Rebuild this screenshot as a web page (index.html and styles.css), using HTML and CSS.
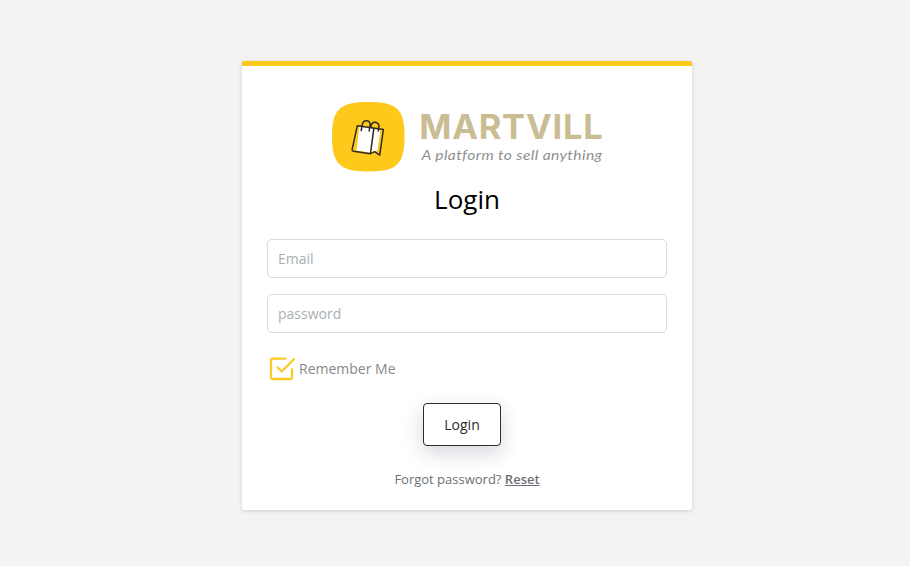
FILE: index.html
```html
<!DOCTYPE html>
<html lang="en">
<head>
<meta charset="utf-8">
<title>Martvill Login</title>
<link rel="stylesheet" href="styles.css">
</head>
<body>
<main class="card">
  <svg class="logo" width="272" height="72" viewBox="331 101 272 72" role="img" aria-label="Martvill">
    <path d="M332 136.500C332 109 340 102 368.500 102S404.500 109 404.500 136.500S397 171.500 368.500 171.500S332 164 332 136.500Z" fill="#fdc91b"/>
    <path d="M359.500 126.300L374 128.500L370.500 152.500L356.500 150.500ZM374.500 129L380.500 129.500L377.500 150.500L374.500 151.500L371 153Z" fill="#fff"/>
    <g fill="none" stroke="#302b20" stroke-width="1.500" stroke-linecap="round" stroke-linejoin="round">
      <path d="M357.300 125.700L383.400 129.500L379.700 155.200L374.600 151.700L370.500 153.700L353.500 151.300Q351.800 150.800 352.200 149.200Z"/>
      <path d="M373.800 128.400L370.500 153.500M361.200 130.500L362.300 124.500Q363.400 120.300 366.700 120.700Q370.700 121.200 370 125.500L369.200 131M370.900 126.500Q371.700 122 375.200 122.200Q379.700 122.800 378.800 127.500L378.300 131"/>
    </g>
    <text class="brand" x="419.200" y="139" textLength="183.500" lengthAdjust="spacing">MARTVILL</text>
    <text class="tagline" x="421.500" y="160" textLength="181" lengthAdjust="spacingAndGlyphs">A platform to sell anything</text>
  </svg>
  <h1 class="title">Login</h1>
  <form class="form">
    <input class="field" type="email" placeholder="Email">
    <input class="field" type="password" placeholder="password">
    <div class="remember">
      <svg width="28" height="28" viewBox="0 0 28 28" fill="none" stroke="#fdc924" stroke-width="2.300" stroke-linecap="round" stroke-linejoin="round">
        <path d="M18.500 4.700H6Q4 4.700 4 6.700V23Q4 25 6 25H23Q25 25 25 23V15.500M10.700 13.500L14.700 17.500L26.800 5.300"/>
      </svg>
      <span>Remember Me</span>
    </div>
    <button class="submit" type="button">Login</button>
  </form>
  <p class="forgot">Forgot password? <a class="reset" href="#">Reset</a></p>
</main>
</body>
</html>
```
FILE: styles.css
```css
* { box-sizing: border-box; }
body {
  margin: 0;
  min-height: 566px;
  padding: 61px 0 0 242px;
  background: #f3f3f3;
  font-family: "Open Sans", sans-serif;
  font-size: 14px;
  color: #888;
}
.card {
  width: 450px;
  height: 449px;
  padding: 35px 25px 0;
  display: flex;
  flex-direction: column;
  align-items: center;
  background: #fff;
  border-top: 5px solid #fdc91b;
  border-radius: 2px;
  box-shadow: 0 1px 4px rgba(0, 0, 0, .15);
}
.logo { display: block; flex: none; }
.brand { font: 700 34.5px Inter, sans-serif; fill: #cabd93; }
.tagline { font: italic 400 14px Lato, sans-serif; letter-spacing: .35px; fill: #909090; font-variant-ligatures: none; }
.title {
  margin: 8px 0 0;
  font-size: 26px;
  line-height: 36px;
  font-weight: 400;
  color: #000;
}
.form {
  width: 100%;
  margin-top: 22px;
  display: flex;
  flex-direction: column;
}
.field {
  height: 39px;
  margin-bottom: 16px;
  padding: 0 10px;
  border: 1px solid #dadada;
  border-radius: 5px;
  background: #fff;
  font: inherit;
  outline: none;
}
.field::placeholder { color: #aaafb3; opacity: 1; }
.remember {
  height: 28px;
  margin-top: 5px;
  display: flex;
  align-items: center;
  gap: 4px;
}
.submit {
  align-self: center;
  width: 78px;
  height: 43px;
  margin: 21px 0 0 -10px;
  padding: 0;
  border: 1px solid #2c2c2c;
  border-radius: 4px;
  background: #fff;
  box-shadow: 0 7px 20px rgba(50, 45, 90, .2);
  font: inherit;
  color: #2c2c2c;
}
.forgot {
  margin: 23px 0 0;
  font-size: 13px;
  line-height: 20px;
  color: #6c6f75;
}
.reset { color: #6c6f75; font-weight: 600; text-decoration: underline; }
```
